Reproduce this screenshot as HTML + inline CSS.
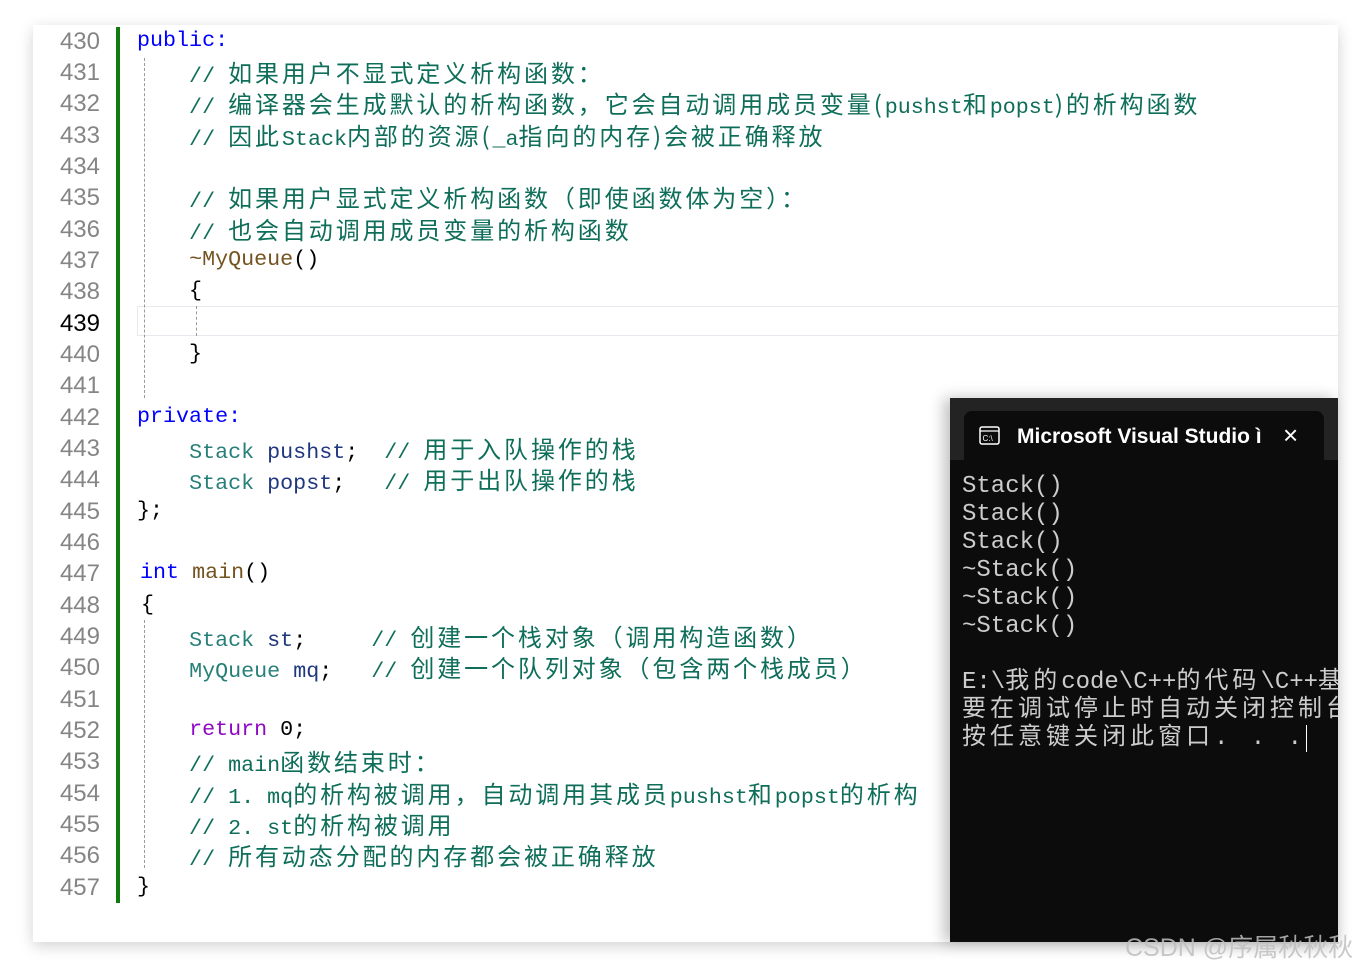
<!DOCTYPE html>
<html><head><meta charset="utf-8"><style>
html,body{margin:0;padding:0;background:#fff;width:1364px;height:969px;overflow:hidden;position:relative}
.page{position:absolute;left:33px;top:25px;width:1305px;height:917px;background:#fff;box-shadow:0 4px 14px rgba(0,0,0,0.18)}
.ln{position:absolute;left:40px;width:60px;text-align:right;font:24px "Liberation Sans",sans-serif;color:#858585;height:31px;line-height:31px}
.cl{position:absolute;left:137px;white-space:pre;font:21.7px "Liberation Mono",monospace;height:31px;line-height:31px;color:#000}
.z{font-family:"Noto Sans CJK SC",sans-serif;font-size:24px;letter-spacing:2.9px}
.cm{color:#0f6e5a}.kw{color:#0000ff}.ty{color:#267f78}.fn{color:#74531f}.vr{color:#1f377f}.rt{color:#8f08c4}
.con{position:absolute;left:950px;top:398px;width:388px;height:544px;background:#0c0c0c;box-shadow:-6px 0 14px rgba(0,0,0,0.25);overflow:hidden}
.bar{position:absolute;left:0;top:0;width:388px;height:62px;background:#232323}
.tab{position:absolute;left:14px;top:13px;width:360px;height:49px;background:#0c0c0c;border-radius:8px 8px 0 0}
.ttl{position:absolute;left:67px;top:27px;color:#fff;font:bold 21px "Liberation Sans",sans-serif;white-space:nowrap}
.out{position:absolute;left:12px;top:75px;color:#cccccc;font:24px "Liberation Mono","Noto Sans CJK SC",monospace;line-height:28px;white-space:pre}
.oz{letter-spacing:4px}
</style></head><body>
<div class="page"></div>
<div style="position:absolute;left:116px;top:27px;width:4px;height:876px;background:#107c10"></div>
<div style="position:absolute;left:137px;top:306px;width:1201px;height:30px;border:1px solid #e8e8ee;border-right:none;box-sizing:border-box"></div>
<div style="position:absolute;left:144px;top:58px;height:340px;border-left:1px dashed #9a9a9a"></div>
<div style="position:absolute;left:144px;top:620px;height:248px;border-left:1px dashed #9a9a9a"></div>
<div style="position:absolute;left:196px;top:306px;height:30px;border-left:1px dashed #9a9a9a"></div>

<div class="ln" style="top:26px">430</div><div class="ln" style="top:57px">431</div><div class="ln" style="top:88px">432</div><div class="ln" style="top:120px">433</div><div class="ln" style="top:151px">434</div><div class="ln" style="top:182px">435</div><div class="ln" style="top:214px">436</div><div class="ln" style="top:245px">437</div><div class="ln" style="top:276px">438</div><div class="ln" style="top:308px;color:#000">439</div><div class="ln" style="top:339px">440</div><div class="ln" style="top:370px">441</div><div class="ln" style="top:402px">442</div><div class="ln" style="top:433px">443</div><div class="ln" style="top:464px">444</div><div class="ln" style="top:496px">445</div><div class="ln" style="top:527px">446</div><div class="ln" style="top:558px">447</div><div class="ln" style="top:590px">448</div><div class="ln" style="top:621px">449</div><div class="ln" style="top:652px">450</div><div class="ln" style="top:684px">451</div><div class="ln" style="top:715px">452</div><div class="ln" style="top:746px">453</div><div class="ln" style="top:778px">454</div><div class="ln" style="top:809px">455</div><div class="ln" style="top:840px">456</div><div class="ln" style="top:872px">457</div>

<div class="cl kw" style="top:25px">public:</div>
<div class="cl cm" style="top:56px">    // <span class="z">如果用户不显式定义析构函数：</span></div>
<div class="cl cm" style="top:87px">    // <span class="z">编译器会生成默认的析构函数，它会自动调用成员变量(</span>pushst<span class="z">和</span>popst<span class="z">)的析构函数</span></div>
<div class="cl cm" style="top:119px">    // <span class="z">因此</span>Stack<span class="z">内部的资源(</span>_a<span class="z">指向的内存)会被正确释放</span></div>
<div class="cl cm" style="top:181px">    // <span class="z">如果用户显式定义析构函数（即使函数体为空）：</span></div>
<div class="cl cm" style="top:213px">    // <span class="z">也会自动调用成员变量的析构函数</span></div>
<div class="cl" style="top:244px">    <span class="fn">~MyQueue</span>()</div>
<div class="cl" style="top:275px">    {</div>
<div class="cl" style="top:338px">    }</div>
<div class="cl kw" style="top:401px">private:</div>
<div class="cl" style="top:432px">    <span class="ty">Stack</span> <span class="vr">pushst</span>;  <span class="cm">// <span class="z">用于入队操作的栈</span></span></div>
<div class="cl" style="top:463px">    <span class="ty">Stack</span> <span class="vr">popst</span>;   <span class="cm">// <span class="z">用于出队操作的栈</span></span></div>
<div class="cl" style="top:495px">};</div>
<div class="cl" style="top:557px;left:140px"><span class="kw">int</span> <span class="fn">main</span>()</div>
<div class="cl" style="top:589px;left:141px">{</div>
<div class="cl" style="top:620px">    <span class="ty">Stack</span> <span class="vr">st</span>;     <span class="cm">// <span class="z">创建一个栈对象（调用构造函数）</span></span></div>
<div class="cl" style="top:651px">    <span class="ty">MyQueue</span> <span class="vr">mq</span>;   <span class="cm">// <span class="z">创建一个队列对象（包含两个栈成员）</span></span></div>
<div class="cl" style="top:714px">    <span class="rt">return</span> 0;</div>
<div class="cl cm" style="top:745px">    // main<span class="z">函数结束时：</span></div>
<div class="cl cm" style="top:777px">    // 1. mq<span class="z">的析构被调用，自动调用其成员</span>pushst<span class="z">和</span>popst<span class="z">的析构</span></div>
<div class="cl cm" style="top:808px">    // 2. st<span class="z">的析构被调用</span></div>
<div class="cl cm" style="top:839px">    // <span class="z">所有动态分配的内存都会被正确释放</span></div>
<div class="cl" style="top:871px">}</div>

<div class="con">
 <div class="bar"></div>
 <div class="tab"></div>
 <svg style="position:absolute;left:29px;top:28px" width="21" height="19" viewBox="0 0 21 19"><rect x="1" y="1" width="19" height="17" rx="2" fill="none" stroke="#fff" stroke-width="1.5"/><line x1="1" y1="5" x2="20" y2="5" stroke="#fff" stroke-width="1.3"/><text x="3.5" y="15" font-size="8" fill="#fff" font-family="Liberation Sans">C:\</text></svg>
 <div class="ttl">Microsoft Visual Studio ì</div>
 <div style="position:absolute;left:333px;top:22px;color:#fff;font:26px 'Liberation Sans',sans-serif">×</div>
 <div class="out">Stack()
Stack()
Stack()
~Stack()
~Stack()
~Stack()

E:\<span class="oz">我的</span>code\C++<span class="oz">的代码</span>\C++<span class="oz">基础</span>
<span class="oz">要在调试停止时自动关闭控制台</span>
<span class="oz">按任意键关闭此窗口. . .</span><span style="border-left:1px solid #fff"></span></div>
</div>
<div style="position:absolute;left:1125px;top:928px;color:rgba(190,190,190,0.85);font:25px 'Liberation Sans','Noto Sans CJK SC',sans-serif;white-space:nowrap">CSDN @序属秋秋秋</div>
</body></html>
